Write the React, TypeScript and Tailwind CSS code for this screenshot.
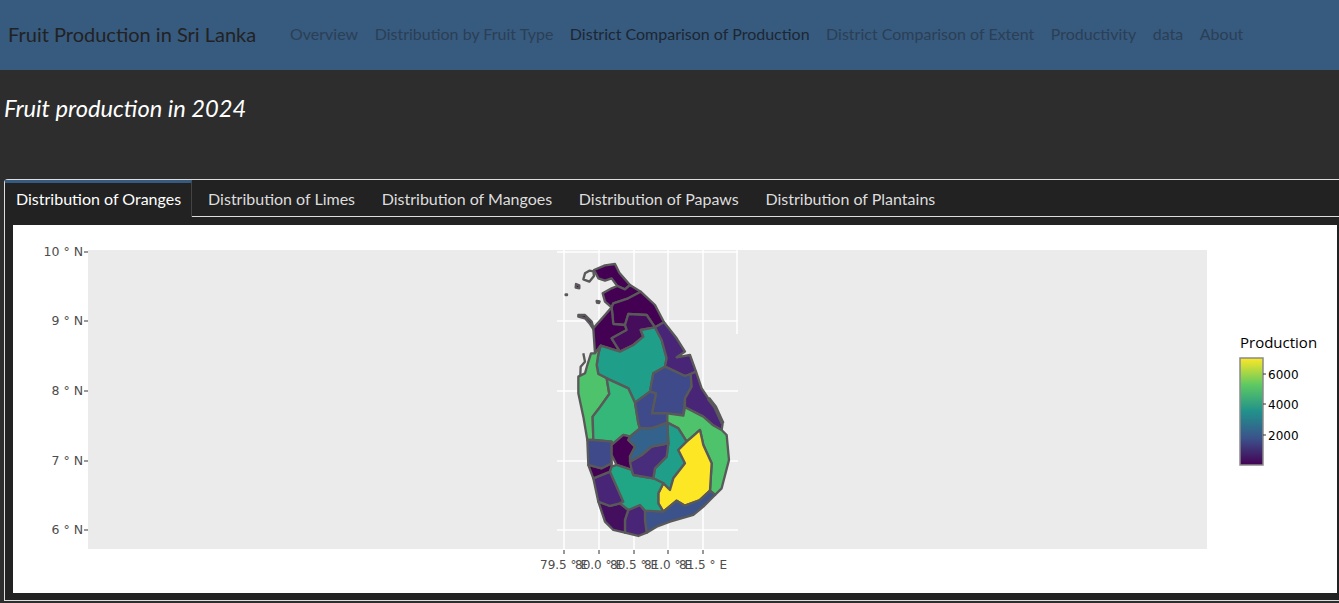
const navLinks = [
  { label: 'Overview' },
  { label: 'Distribution by Fruit Type' },
  { label: 'District Comparison of Production', active: true },
  { label: 'District Comparison of Extent' },
  { label: 'Productivity' },
  { label: 'data' },
  { label: 'About' },
]

const tabs = ['Distribution of Limes', 'Distribution of Mangoes', 'Distribution of Papaws', 'Distribution of Plantains']

// district shapes, traced in 3x pixels with origin at 530,250
const districts = [
  { fill: '#440154', pts: '192,60 225,46 255,42 268,68 300,105 285,118 262,108 245,85 225,92 205,85' },
  { fill: '#440154', pts: '218,130 245,115 262,108 285,118 300,105 332,125 295,145 250,160 245,172 225,155' },
  { fill: '#440154', pts: '245,172 250,160 295,145 332,125 375,165 402,217 375,232 350,195 295,192 285,225 250,222' },
  { fill: '#440154', pts: '245,172 250,222 285,225 290,240 245,265 270,305 212,287 195,310 190,235 225,195' },
  { fill: '#450d5b', pts: '285,225 295,192 350,195 375,232 332,240 340,260 310,285 270,305 245,265 290,240' },
  { fill: '#1f9e89', pts: '212,287 270,305 310,285 340,260 332,240 375,232 395,270 410,325 405,350 370,370 360,425 315,458 295,415 230,385 205,372 200,345 205,312' },
  { fill: '#482576', pts: '375,232 402,217 440,265 465,305 440,322 480,315 498,365 482,372 465,378 405,350 410,325 395,270' },
  { fill: '#4ec36b', pts: '183,310 195,310 212,287 205,312 200,345 205,372 230,385 238,432 205,478 188,500 190,570 172,570 160,500 145,430 145,380 165,370 172,345' },
  { fill: '#35b779', pts: '230,385 295,415 315,458 325,520 330,535 300,560 280,555 245,585 245,575 190,570 188,500 205,478 238,432' },
  { fill: '#3e4a89', pts: '370,370 405,350 465,378 482,372 485,410 465,445 460,495 412,490 366,490 378,430 360,425' },
  { fill: '#3e4a89', pts: '315,458 360,425 378,430 366,490 412,490 412,518 365,535 330,535 325,520' },
  { fill: '#482576', pts: '482,372 498,365 515,415 535,445 555,470 578,520 575,540 548,525 520,500 465,472 465,445 485,410' },
  { fill: '#4ec36b', pts: '412,490 460,497 465,472 520,500 548,525 575,540 590,555 597,630 575,715 555,735 540,722 545,640 520,585 510,540 495,553 470,575 445,535 412,518' },
  { fill: '#1f9e89', pts: '412,518 445,535 470,575 445,600 465,640 430,685 420,720 400,700 370,685 375,655 410,620 415,580' },
  { fill: '#fde725', pts: '510,540 520,585 545,640 540,722 510,750 465,767 440,752 400,785 385,760 385,730 400,700 420,720 430,685 465,640 445,600 470,575 495,553' },
  { fill: '#3b528b', pts: '345,782 400,785 440,752 465,767 510,750 540,722 555,735 520,770 490,795 420,815 380,830 350,848 345,810' },
  { fill: '#482576', pts: '295,780 330,765 345,782 345,810 350,848 325,858 285,848 285,810' },
  { fill: '#440f5f', pts: '205,755 240,768 270,760 295,780 285,810 285,848 250,840 225,815' },
  { fill: '#482576', pts: '190,685 240,665 280,755 270,760 240,768 205,755' },
  { fill: '#440154', pts: '175,645 215,655 245,640 245,650 240,665 190,685' },
  { fill: '#3e4a89', pts: '172,570 190,570 245,575 245,585 245,615 245,640 215,655 175,645' },
  { fill: '#440154', pts: '280,555 300,560 295,570 315,590 300,620 305,660 260,645 245,615 245,585' },
  { fill: '#21a685', pts: '245,650 260,645 305,660 310,675 370,685 400,700 385,730 385,760 400,785 345,782 330,765 295,780 270,760 280,755 240,665' },
  { fill: '#472d7b', pts: '300,635 335,615 365,590 415,580 410,620 375,655 370,685 310,675 305,660' },
  { fill: '#33638d', pts: '300,560 330,535 365,535 412,518 415,580 365,590 335,615 300,635 300,620 315,590 295,570' },
]

const lonTicks = [
  { x: 564, label: '79.5 ° E' },
  { x: 599, label: '80.0 ° E' },
  { x: 634, label: '80.5 ° E' },
  { x: 668, label: '81.0 ° E' },
  { x: 703, label: '81.5 ° E' },
]
const latTicks = [
  { y: 252, label: '10 ° N' },
  { y: 321, label: '9 ° N' },
  { y: 391, label: '8 ° N' },
  { y: 461, label: '7 ° N' },
  { y: 530, label: '6 ° N' },
]
const legendTicks = [
  { y: 374, label: '6000' },
  { y: 404, label: '4000' },
  { y: 435, label: '2000' },
]

function SriLankaChart() {
  return (
    <svg viewBox="13 225 1324 368" className="block h-[368px] w-full" style={{ fontFamily: '"DejaVu Sans", sans-serif' }}>
      <defs>
        <linearGradient id="viridis" x1="0" y1="0" x2="0" y2="1">
          <stop offset="0" stopColor="#fde725" />
          <stop offset="0.25" stopColor="#5ec962" />
          <stop offset="0.5" stopColor="#21918c" />
          <stop offset="0.75" stopColor="#3b528b" />
          <stop offset="1" stopColor="#440154" />
        </linearGradient>
      </defs>
      <rect x="88" y="250" width="1119" height="299" fill="#ebebeb" />
      {lonTicks.map(t => (
        <g key={t.x}>
          <line x1={t.x} x2={t.x} y1="250" y2="549" stroke="#fff" strokeWidth="1.5" />
          <line x1={t.x} x2={t.x} y1="550" y2="554" stroke="#333" />
          <text x={t.x} y="569" textAnchor="middle" fontSize="12" fill="#4d4d4d">{t.label}</text>
        </g>
      ))}
      <line x1="737" x2="737" y1="250" y2="334" stroke="#fff" strokeWidth="1.5" />
      {latTicks.map(t => (
        <g key={t.y}>
          <line x1="557" x2="738" y1={t.y} y2={t.y} stroke="#fff" strokeWidth="1.5" />
          <line x1="84" x2="88" y1={t.y} y2={t.y} stroke="#333" />
          <text x="83" y={t.y + 4} textAnchor="end" fontSize="12.5" fill="#4d4d4d">{t.label}</text>
        </g>
      ))}
      <g transform="translate(530 250) scale(0.3333)" stroke="#595959" strokeWidth="7" strokeLinejoin="round">
        <polygon points="145,195 165,195 185,215 192,240 180,222 165,205 145,200" fill="#440154" />
        <polygon points="165,70 178,62 190,64 192,78 178,95 160,88" fill="none" />
        <polygon points="138,102 148,106 148,115 137,113" fill="#440154" />
        <polygon points="200,153 209,154 207,159 201,158" fill="#440154" />
        <polygon points="107,133 111,133 111,135 107,135" fill="#595959" />
        <polyline points="160,310 165,335 152,350 150,400 160,460 168,470" fill="none" />
        {districts.map(d => (
          <polygon key={d.pts} points={d.pts} fill={d.fill} />
        ))}
        <polyline points="535,445 555,470 578,520" fill="none" strokeWidth="12" />
      </g>
      <text x="1240" y="347.5" fontSize="15" fill="#000" style={{ fontFamily: '"Open Sans", sans-serif' }}>Production</text>
      <rect x="1240" y="358" width="23" height="107" fill="url(#viridis)" stroke="#8a8a8a" strokeWidth="1.5" />
      {legendTicks.map(t => (
        <g key={t.y}>
          <line x1="1263" x2="1266" y1={t.y} y2={t.y} stroke="#333" />
          <text x="1268" y={t.y + 5} fontSize="12" fill="#000">{t.label}</text>
        </g>
      ))}
    </svg>
  )
}

export default function App() {
  return (
    <div className="h-[603px] overflow-hidden bg-[#2d2d2d] font-['Lato',sans-serif]">
      <nav className="flex h-[70px] items-center bg-[#375a7f] pl-2">
        <span className="-mt-0.5 w-[274px] text-[20px] text-[#222]">Fruit Production in Sri Lanka</span>
        <div className="-mt-0.5 flex gap-[16.5px] pl-2 text-[16px]">
          {navLinks.map(link => (
            <a key={link.label} className={link.active ? 'text-[#1c2733]' : 'text-[#2b3f55]'}>
              {link.label}
            </a>
          ))}
        </div>
      </nav>
      <h2 className="mt-[23px] ml-1 h-[86px] text-[23.7px] leading-[30px] text-white italic">Fruit production in 2024</h2>
      <div className="ml-1 h-[422px] rounded-tl border border-r-0 border-[#ddd] bg-[#222]">
        <div className="flex h-[37px] items-stretch border-b border-[#ddd] text-[16px] text-[#ddd]">
          <a className="-mb-px flex items-center border-t-[3px] border-r border-t-[#375a7f] border-r-[#444] bg-[#222] pr-[10px] pb-[3px] pl-[11px] text-white">
            Distribution of Oranges
          </a>
          <div className="ml-[16px] flex items-center gap-[26.7px] pt-0.5">
            {tabs.map(tab => (
              <a key={tab}>{tab}</a>
            ))}
          </div>
        </div>
        <div className="mt-2 mr-[2px] ml-2 bg-white">
          <SriLankaChart />
        </div>
      </div>
    </div>
  )
}
